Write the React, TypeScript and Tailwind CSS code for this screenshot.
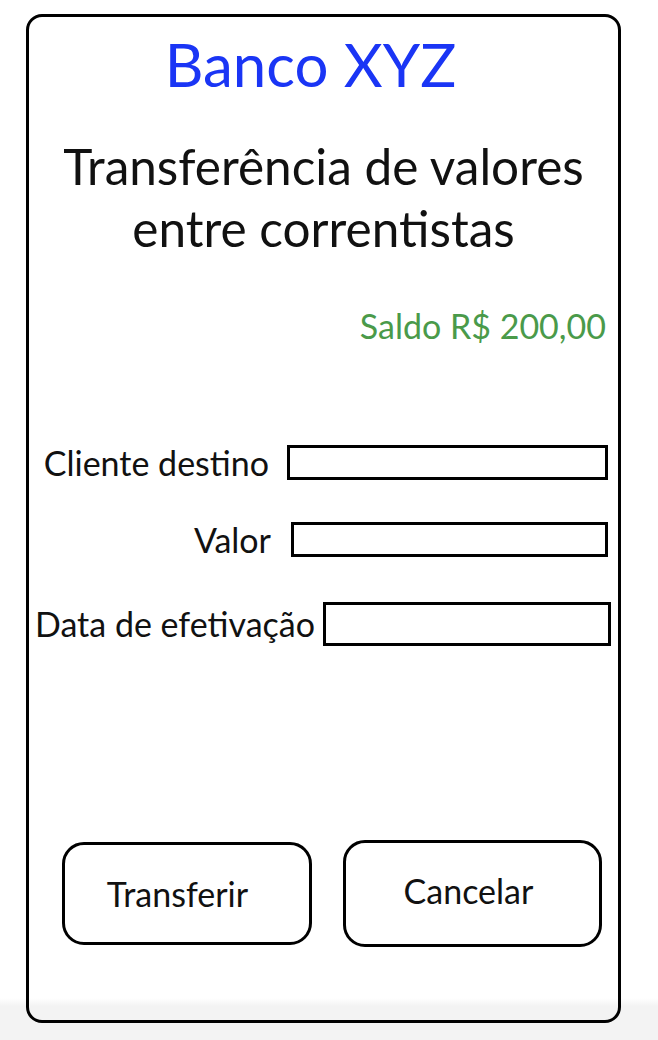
import React from "react";

export default function App() {
  return (
    <div
      className="w-[658px] h-[1040px] pt-[14px] pl-[26px] bg-[linear-gradient(to_bottom,#ffffff_0px,#ffffff_998px,#f3f3f3_1006px,#f3f3f3_1040px)]"
      style={{ fontFamily: "Lato, 'Open Sans', sans-serif" }}
    >
      <div className="w-[595px] h-[1009px] border-[3px] border-black rounded-[16px] flex flex-col text-[#111]">
        <div className="mt-[15px] pr-[26px] text-center text-[60px] leading-[64px] text-[#1a35f5]">Banco XYZ</div>
        <div className="mt-[39px] text-center text-[49.5px] leading-[62px]">
          Transferência de valores
          <br />
          entre correntistas
        </div>
        <div className="mt-[47px] pr-[12px] text-right text-[34px] leading-[40px] text-[#4a9a4a]">Saldo R$ 200,00</div>

        <div className="mt-[99px] flex flex-col text-[34px] leading-[36px]">
          <div className="flex items-center justify-end pr-[10px] h-[35px]">
            <span className="mr-[18px]">Cliente destino</span>
            <div className="w-[321px] h-[35px] border-[3px] border-black" />
          </div>
          <div className="mt-[42px] flex items-center justify-end pr-[10px] h-[35px]">
            <span className="mr-[20px]">Valor</span>
            <div className="w-[317px] h-[35px] border-[3px] border-black" />
          </div>
          <div className="mt-[45px] flex items-center justify-end pr-[7px] h-[44px]">
            <span className="mr-[8px]">Data de efetivação</span>
            <div className="w-[288px] h-[44px] border-[3px] border-black" />
          </div>
        </div>

        <div className="mt-[194px] flex items-start pl-[33px] text-[34px] leading-[40px]">
          <div className="mt-[2px] w-[250px] h-[103px] border-[3px] border-black rounded-[22px] flex items-center justify-center pr-[19px]">
            Transferir
          </div>
          <div className="ml-[31px] w-[259px] h-[107px] border-[3px] border-black rounded-[22px] flex items-center justify-center pr-[8px] pb-[6px]">
            Cancelar
          </div>
        </div>
      </div>
    </div>
  );
}
